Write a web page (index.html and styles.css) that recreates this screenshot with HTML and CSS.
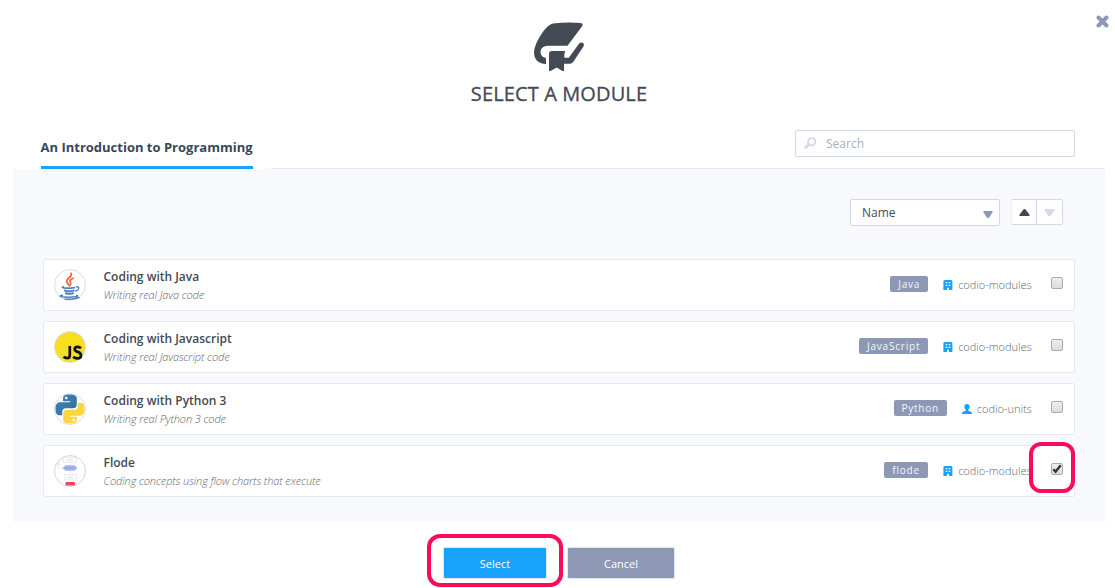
FILE: index.html
```html
<!DOCTYPE html>
<html lang="en">
<head>
<meta charset="utf-8">
<title>Select a module</title>
<link rel="stylesheet" href="styles.css">
</head>
<body>
<svg class="defs" width="0" height="0" aria-hidden="true">
  <symbol id="org" viewBox="0 0 10 10">
    <path fill="#18a2fc" fill-rule="evenodd" d="M1.500 0h7l.9 1V10H6V7.800H4V10H.4V1zM2.700 2v1.300h1.600V2zM5.700 2v1.300h1.600V2zM2.700 4.700V6h1.600V4.700zM5.700 4.700V6h1.600V4.700z"/>
  </symbol>
  <symbol id="user" viewBox="0 0 10 10">
    <path fill="#18a2fc" d="M5 0C3.300 0 2.400 1.100 2.400 2.700 2.400 4 3 5 3.700 5.600V6.800L.8 7.800Q0 8.200 0 10H10Q10 8.200 9.200 7.800L6.300 6.800V5.600C7 5 7.600 4 7.600 2.700 7.600 1.100 6.700 0 5 0z"/>
  </symbol>
</svg>
<main class="dialog">
  <button class="close" aria-label="Close"><svg width="13" height="13" viewBox="0 0 13 13"><path d="M2.500 2.500l8 8M10.500 2.500l-8 8" stroke="#8d98b5" stroke-width="4" stroke-linecap="round"/></svg></button>
  <header class="header">
    <svg class="logo" width="52" height="50" viewBox="533 22 52 50" fill="#434a54">
      <path d="M553 23.500Q567 21.800 580.500 23Q583.500 23.500 582.300 26L567.500 45.700H549Q541 45.700 540.500 51.500Q540.500 57 546 58V64Q534 63.500 534 52Q534.500 44 542.500 32.500Q548 24.500 553 23.500z"/>
      <path d="M552 51H565.200Q564.300 53 564.300 57.800H568.800L579 43.800Q580.500 41.800 582.800 42.700Q584.700 44 583.600 46.200L573.200 62Q572 63.700 570 63.700H564V71H562.500L556.700 67.500L550.500 71H549V54Q549 51 552 51z"/>
    </svg>
    <h1 class="title">SELECT A MODULE</h1>
  </header>
  <div class="tabs">
    <div class="tab"><span>An Introduction to Programming</span></div>
    <div class="tabs-rest">
      <div class="search">
        <svg width="13" height="12" viewBox="0 0 13 12" fill="none" stroke="#d3d8e7"><circle cx="7.700" cy="4.800" r="3.700" stroke-width="1.900"/><path d="M4.600 7.800L1.700 10.500" stroke-width="2.600" stroke-linecap="round"/></svg>
        <span>Search</span>
      </div>
    </div>
  </div>
  <section class="panel">
    <div class="toolbar">
      <div class="select"><span>Name</span><svg width="10" height="7" viewBox="0 0 10 7"><path fill="#8d98b5" d="M.8 0h8.400Q10 .2 9.500 1.300L6.400 6.300Q5 7.500 3.600 6.300L.5 1.300Q0 .2.8 0z"/></svg></div>
      <div class="sort">
        <div class="sort-up"><svg width="11" height="7" viewBox="0 0 11 7"><path fill="#434a54" d="M5.500 0Q6.300 0 7 1L10.700 6Q10.800 7 10 7H1Q.2 7 .3 6L4 1Q4.700 0 5.500 0z"/></svg></div>
        <div class="sort-down"><svg width="11" height="8" viewBox="0 0 11 8"><path fill="#d6dae8" d="M5.500 7.500Q6.300 7.500 7 6.500L10.700 1Q10.800 0 10 0H1Q.2 0 .3 1L4 6.500Q4.700 7.500 5.500 7.500z"/></svg></div>
      </div>
    </div>
    <div class="list">
      <article class="row">
        <svg class="avatar" viewBox="0 0 32 32">
          <circle cx="16" cy="16" r="15.500" fill="#fff" stroke="#d8dced"/>
          <g fill="none" stroke="#f2663b" stroke-linecap="round"><path d="M17.200 4.500C18.500 8 12.300 9 12.700 12.200C12.900 14 14.500 14.900 14.800 16.300" stroke-width="1.900"/><path d="M19.300 9.300C15.500 11 15.300 12 16.500 13.500C17.200 14.500 16.600 15.700 15.800 16.600" stroke-width="1.700"/></g>
          <g fill="none" stroke="#4f83c2" stroke-linecap="round"><path d="M9.500 17.900Q7 18.500 10 19Q15 19.600 20.500 18.600" stroke-width="1.700"/><path d="M10.800 21.600Q15 22.800 19.700 21.600M11.800 24.200Q15.500 25.300 19 24.200" stroke-width="2"/><path d="M22.500 17.800Q25.500 17.700 24.500 20Q23.800 21.400 21.800 22" stroke-width="1.400"/><path d="M8.500 26.300Q4 27 8 27.800Q15 28.700 22.300 27.600Q24.500 27 22.500 26.500M11 30Q19 30.700 25 28.500" stroke-width="1.500"/></g>
        </svg>
        <div class="info"><h2 class="name">Coding with Java</h2><p class="desc">Writing real Java code</p></div>
        <span class="tag tag-java">Java</span>
        <span class="owner"><svg class="icon"><use href="#org"/></svg><span class="owner-name">codio-modules</span></span>
        <span class="check"></span>
      </article>
      <article class="row">
        <svg class="avatar" viewBox="0 0 32 32"><circle cx="16" cy="16" r="15.500" fill="#f7df1e" stroke="#d8dced"/><path d="M15.800 15V24.300Q15.800 27.200 13.300 27.200Q11 27.200 9.700 25.600M27 17.200Q25.500 15.900 23.600 15.900Q20.700 15.900 20.700 18.200Q20.700 19.900 23.700 20.900Q27 22 27 24.400Q27 27.400 23.400 27.400Q20.800 27.400 19.200 25.800" fill="none" stroke="#111" stroke-width="2.700"/></svg>
        <div class="info"><h2 class="name">Coding with Javascript</h2><p class="desc">Writing real Javascript code</p></div>
        <span class="tag tag-js">JavaScript</span>
        <span class="owner"><svg class="icon"><use href="#org"/></svg><span class="owner-name">codio-modules</span></span>
        <span class="check"></span>
      </article>
      <article class="row">
        <svg class="avatar" viewBox="0 0 32 32">
          <defs><linearGradient id="blue" x2="1" y2="1"><stop stop-color="#4287b8"/><stop offset="1" stop-color="#306998"/></linearGradient></defs>
          <circle cx="16" cy="16" r="15.500" fill="#fff" stroke="#d8dced"/>
          <path fill="url(#blue)" d="M15.800 1.500C10.500 1.500 9 3 9 5.500V8.300H16.200V9.300H6C3 9.300 1.500 11.500 1.500 16C1.500 20.500 3 22.300 5.500 22.300H8.200V18.800Q8.200 15.200 12 15.200H19Q22.800 15.200 22.800 11.500V5.500C22.800 2.500 20 1.500 15.800 1.500z"/>
          <path fill="#ffd640" d="M16.200 30.500C21.500 30.500 23 29 23 26.500V23.700H15.800V22.700H26C29 22.700 30.500 20.500 30.500 16C30.500 11.500 29 9.700 26.500 9.700H23.800V13.200Q23.800 16.800 20 16.800H13Q9.200 16.800 9.200 20.500V26.500C9.200 29.500 12 30.500 16.200 30.500z"/>
          <circle cx="12.300" cy="5" r="1.300" fill="#fff"/><circle cx="19.700" cy="27" r="1.300" fill="#fff"/>
        </svg>
        <div class="info"><h2 class="name">Coding with Python 3</h2><p class="desc">Writing real Python 3 code</p></div>
        <span class="tag tag-python">Python</span>
        <span class="owner"><svg class="icon"><use href="#user"/></svg><span class="owner-name">codio-units</span></span>
        <span class="check"></span>
      </article>
      <article class="row">
        <svg class="avatar" viewBox="0 0 32 32">
          <circle cx="16" cy="16" r="15.500" fill="#fff" stroke="#d2d6ed"/>
          <path d="M16 1V30M10 5H4V13H9" fill="none" stroke="#e6e8ee" stroke-width=".8"/>
          <g fill="#fff" stroke="#e4e5ea" stroke-width=".8"><rect x="9.500" y="2.500" width="13" height="5"/><rect x="10.500" y="19.500" width="12" height="4.500"/></g>
          <path d="M12 5H20M13 22H19M2.500 9H6" stroke="#d8dae0" stroke-width="1"/>
          <path fill="#a3b3f3" d="M8.500 13L11.500 10.300H20.500L23.500 13L20.500 15.800H11.500z"/><path d="M12 13H20" stroke="#8f9fe4"/>
          <rect x="11.500" y="27" width="9.500" height="3.500" rx="1.200" fill="#f6435b"/>
        </svg>
        <div class="info"><h2 class="name">Flode</h2><p class="desc">Coding concepts using flow charts that execute</p></div>
        <span class="tag tag-flode">flode</span>
        <span class="owner"><svg class="icon"><use href="#org"/></svg><span class="owner-name">codio-modules</span></span>
        <span class="check checked"><svg width="12" height="12" viewBox="0 0 12 12"><path d="M2.300 6.200L4.600 8.700L9.700 2.300" fill="none" stroke="#333" stroke-width="2.400"/></svg><i class="mark mark-check"></i></span>
      </article>
    </div>
  </section>
  <footer class="footer">
    <button class="btn primary">Select<i class="mark mark-select"></i></button>
    <button class="btn cancel">Cancel</button>
  </footer>
</main>
</body>
</html>
```
FILE: styles.css
```css
* { box-sizing: border-box; }
body { margin: 0; background: #fff; font-family: "Open Sans", sans-serif; color: #434a54; overflow: hidden; }
svg { display: block; flex: none; }
h1, h2, p { margin: 0; }
button { border: 0; padding: 0; font-family: inherit; }
.defs { position: absolute; }
.dialog { position: relative; width: 1115px; height: 588px; overflow: hidden; padding: 0 10px 0 13px; }
.close { position: absolute; left: 1096px; top: 15px; background: none; }
.header { height: 130px; padding: 22px 0 0 0; display: flex; flex-direction: column; align-items: center; }
.title { font-size: 20px; line-height: 26px; font-weight: 400; letter-spacing: .12px; margin-top: 9px; white-space: nowrap; -webkit-text-stroke: .3px #434a54; }
.tabs { display: flex; height: 39px; padding-left: 28px; }
.tab { width: 212px; border-bottom: 3px solid #18a2fc; font-size: 13px; line-height: 18px; font-weight: 700; color: #39475b; padding-top: 8px; white-space: nowrap; }
.tab span { margin-left: -.5px; }
.tabs-rest { flex: 1; margin-left: 18px; border-bottom: 1px solid #e6e9f1; display: flex; justify-content: flex-end; padding-right: 30px; }
.search { width: 280px; height: 27px; border: 1px solid #d3d8e7; border-radius: 2px; display: flex; align-items: center; gap: 9px; padding-left: 8px; font-size: 12px; color: #a6afc6; }
.search svg { margin-top: -2px; }
.panel { background: #f8f9fd; height: 353px; padding: 30px 30px 0; }
.toolbar { display: flex; justify-content: flex-end; gap: 11px; height: 27px; padding-right: 12px; }
.select { width: 150px; height: 27px; background: #fff; border: 1px solid #d3d8e7; border-radius: 2px; padding: 0 7px 0 11px; display: flex; align-items: center; justify-content: space-between; font-size: 12px; }
.select svg { margin-top: 3px; margin-right: -1px; }
.sort { width: 52px; height: 26px; display: flex; background: #fff; border: 1px solid #d3d8e7; border-left-color: #eceef5; border-radius: 2px; }
.sort-up { width: 25px; display: flex; align-items: center; justify-content: center; border-right: 1px solid #d3d8e7; }
.sort-down { flex: 1; display: flex; align-items: center; justify-content: center; padding-top: 2px; }
.list { display: flex; flex-direction: column; gap: 10px; margin-top: 33px; }
.row { height: 52px; background: #fff; border: 1px solid #e6e9f1; border-radius: 2px; display: flex; align-items: center; padding: 0 11px 0 10px; }
.avatar { width: 32px; height: 32px; }
.info { flex: 1; margin-left: 17.500px; padding-top: 1px; }
.name { font-size: 12px; line-height: 18px; font-weight: 600; }
.desc { font-size: 11px; line-height: 18px; font-weight: 300; font-style: italic; letter-spacing: -.11px; color: #626973; }
.tag { height: 16px; line-height: 17px; background: #8d98b5; color: #f4f6fb; border-radius: 2px; font-size: 10px; letter-spacing: .8px; text-align: center; margin-top: -2px; }
.tag-java { width: 38px; }
.tag-js { width: 69px; }
.tag-python { width: 53px; }
.tag-flode { width: 44px; }
.owner { display: flex; align-items: center; gap: 5px; margin-left: 15px; font-size: 11px; font-weight: 300; line-height: 18px; color: #626973; }
.owner-name { padding-right: .3px; }
.icon { width: 10px; height: 10px; }
.check { position: relative; width: 12px; height: 12px; margin: -4px 0 0 19px; border: 1px solid #aaa; border-radius: 2px; background: linear-gradient(#eee, #dcdcdc); }
.check svg { margin: -1px; }
.mark { position: absolute; border: 4px solid #fc0b5c; pointer-events: none; }
.mark-check { width: 46px; height: 51px; left: -23px; top: -22px; border-radius: 12px; }
.footer { display: flex; gap: 20px; padding: 25px 0 0 430px; }
.btn { position: relative; height: 32px; font-size: 11px; color: #fff; border: 1px solid #e2e5ed; border-radius: 2px; padding: 0; }
.primary { width: 104px; background: #18a2fc; }
.cancel { width: 108px; background: #8d98b5; }
.mark-select { width: 136px; height: 53px; left: -17px; top: -14px; border-radius: 13px; }
```
